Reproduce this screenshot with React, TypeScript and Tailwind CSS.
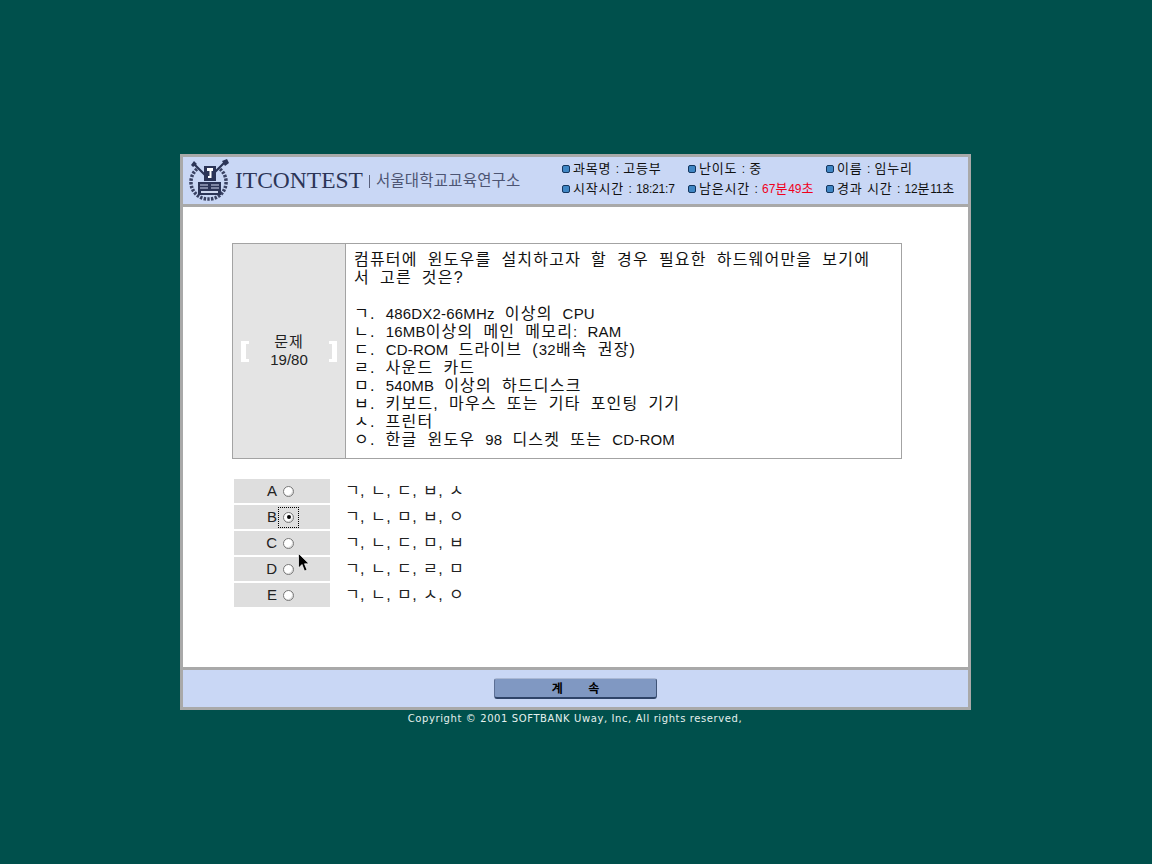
const kr = "font-['Liberation_Sans','Noto_Sans_CJK_KR',sans-serif]";

const info = [
  [{ label: "과목명 : 고등부" }, { label: "시작시간 : 18:21:7" }],
  [{ label: "난이도 : 중" }, { label: "남은시간 : ", red: "67분49초" }],
  [{ label: "이름 : 임누리" }, { label: "경과 시간 : 12분11초" }],
];

const lines = [
  "ㄱ. 486DX2-66MHz 이상의 CPU",
  "ㄴ. 16MB이상의 메인 메모리: RAM",
  "ㄷ. CD-ROM 드라이브 (32배속 권장)",
  "ㄹ. 사운드 카드",
  "ㅁ. 540MB 이상의 하드디스크",
  "ㅂ. 키보드, 마우스 또는 기타 포인팅 기기",
  "ㅅ. 프린터",
  "ㅇ. 한글 윈도우 98 디스켓 또는 CD-ROM",
];

const answers = [
  { key: "A", text: "ㄱ, ㄴ, ㄷ, ㅂ, ㅅ" },
  { key: "B", text: "ㄱ, ㄴ, ㅁ, ㅂ, ㅇ", checked: true },
  { key: "C", text: "ㄱ, ㄴ, ㄷ, ㅁ, ㅂ" },
  { key: "D", text: "ㄱ, ㄴ, ㄷ, ㄹ, ㅁ" },
  { key: "E", text: "ㄱ, ㄴ, ㅁ, ㅅ, ㅇ" },
];

// hangul runs wide like the old bitmap font, latin runs stay tight
function Mixed({ text, latin }: { text: string; latin: string }) {
  return (
    <>
      {text.split(/([A-Za-z0-9:/-]+)/).map((part, i) =>
        i % 2 === 1 ? (
          <span key={i} className={latin}>{part}</span>
        ) : (
          part
        ),
      )}
    </>
  );
}

function Bullet() {
  return (
    <span className="h-[8px] w-[8px] shrink-0 rounded-[2px] border border-[#14365f] bg-[#3f86c4]" />
  );
}

function Logo() {
  return (
    <svg width="44" height="44" viewBox="0 0 44 44" className="shrink-0">
      {/* laurel wreath */}
      <path d="M9 10A17 17 0 0 0 20 40A17 17 0 0 0 32 10" fill="none" stroke="#3a4263" strokeWidth="3.500" strokeDasharray="2.400 1.300" />
      {/* torch and pen */}
      <path d="M6 5L17 16M37 3L25 15" stroke="#2c3557" strokeWidth="2.200" />
      <path d="M3 6l3-4 3 3-4 3zM34 2l5-2 2 4-4 3z" fill="#2c3557" />
      {/* key shield */}
      <rect x="16" y="7" width="12" height="15" fill="#2c3557" />
      <path d="M19 9h6v3h-1.500v7h-3.500v-2h1.500v-5H19z" fill="#fff" />
      {/* open book */}
      <rect x="10" y="23" width="23" height="13" fill="#2c3557" />
      <path d="M12 26h8M23 26h8M12 29h8M23 29h8" stroke="#cfd8f0" strokeWidth="1.200" />
      <rect x="13" y="32" width="17" height="2" fill="#cfd8f0" />
    </svg>
  );
}

function Radio({ checked }: { checked?: boolean }) {
  return (
    <span className="flex h-[11px] w-[11px] items-center justify-center rounded-full border border-[#777] bg-white shadow-[inset_-1px_-1px_0_#ddd]">
      {checked && <span className="h-[4px] w-[4px] rounded-full bg-black" />}
    </span>
  );
}

function Bracket({ flip }: { flip?: boolean }) {
  return (
    <span
      className={`h-[21px] w-[8px] border-y-[3px] border-white ${
        flip ? "border-r-[5px]" : "border-l-[5px]"
      }`}
    />
  );
}

function Cursor() {
  return (
    <svg width="12" height="19" viewBox="0 0 12 19" className="absolute left-[298px] top-[553px]">
      <path d="M0.500 0.500V15L4 11.500 6.500 18 9 17 6.500 10.800H11z" fill="#000" stroke="#fff" strokeWidth="0.700" />
    </svg>
  );
}

export default function App() {
  return (
    <div className={`relative flex h-[864px] w-[1152px] flex-col items-center bg-[#00504c] pt-[154px] ${kr}`}>
      <div className="ml-[-1px] flex h-[556px] w-[791px] flex-col border-[3px] border-[#a9a9a9] bg-white">
        <header className="flex h-[50px] shrink-0 items-center border-b-[3px] border-[#a9a9a9] bg-[#c9d7f5]">
          <div className="flex h-full w-[342px] items-center pl-[5px] pt-[1px]">
            <Logo />
            <span className="ml-[3px] font-['Liberation_Serif',serif] text-[23.500px] leading-none text-[#2c3557]">ITCONTEST</span>
            <span className="ml-[6px] mr-[6px] h-[13px] w-px bg-[#59607c]" />
            <span className="whitespace-nowrap text-[15.500px] leading-none tracking-[0.200px] text-[#4d5573]">서울대학교교육연구소</span>
          </div>
          <div className="flex h-full flex-1 items-center pb-[3px] pl-[37px] text-[13px] leading-[19px] text-[#111]">
            {info.map((col, i) => (
              <div key={i} className={i === 0 ? "w-[126px]" : i === 1 ? "w-[138px]" : ""}>
                {col.map((row) => (
                  <div key={row.label} className="flex items-center gap-[3px] whitespace-nowrap tracking-[0.800px]">
                    <Bullet />
                    <span>
                      <Mixed text={row.label} latin="text-[12px] tracking-[-0.200px]" />
                      {row.red && (
                        <span className="text-[#f0001c]">
                          <Mixed text={row.red} latin="text-[12px] tracking-[0px]" />
                        </span>
                      )}
                    </span>
                  </div>
                ))}
              </div>
            ))}
          </div>
        </header>

        <main className="flex-1 pl-[49px] pt-[36px]">
          <section className="flex h-[216px] w-[670px] border border-[#a3a3a3]">
            <div className="flex w-[113px] shrink-0 items-center justify-between border-r border-[#a3a3a3] bg-[#e4e4e4] px-[8px]">
              <Bracket />
              <div className="text-center text-[15px] leading-[18px] text-[#222]">
                <span className="tracking-[1px]">문제</span>
                <br />
                19/80
              </div>
              <Bracket flip />
            </div>
            <div className="flex-1 pl-[8px] pr-[20px] pt-[7px] text-[16px] leading-[18px] tracking-[1.200px] text-[#111] [word-spacing:4.400px]">
              <p className="whitespace-nowrap">컴퓨터에 윈도우를 설치하고자 할 경우 필요한 하드웨어만을 보기에</p>
              <p>서 고른 것은?</p>
              <p className="h-[18px]" />
              {lines.map((line) => (
                <p key={line} className="whitespace-nowrap">
                  <Mixed text={line} latin="text-[15px] tracking-[0.200px]" />
                </p>
              ))}
            </div>
          </section>

          <div className="mt-[20px] flex flex-col gap-[2px] pl-[2px]">
            {answers.map((a) => (
              <div key={a.key} className="flex h-[24px] items-center">
                <div className="relative flex h-full w-[96px] items-center bg-[#dedede] text-[15px] text-[#222]">
                  <span className="absolute right-[53px]">{a.key}</span>
                  <span
                    className={`absolute left-[44px] flex h-[21px] w-[21px] items-center justify-center ${
                      a.checked ? "border border-dotted border-black" : ""
                    }`}
                  >
                    <Radio checked={a.checked} />
                  </span>
                </div>
                <span className="ml-[15px] pb-[1px] text-[16px] tracking-[0.400px] text-[#222] [word-spacing:1.200px]">{a.text}</span>
              </div>
            ))}
          </div>
        </main>

        <footer className="flex h-[40px] shrink-0 items-center justify-center border-t-[3px] border-[#a9a9a9] bg-[#c9d7f5]">
          <button className="h-[21px] w-[163px] rounded-[3px] border-b-2 border-r border-t border-l border-b-[#2f4468] border-r-[#3f5376] border-t-[#aab8d4] border-l-[#5c6f95] bg-[#8098c2] pt-[1px] text-[12px] font-bold leading-none text-black [word-spacing:22px]">
            계 속
          </button>
        </footer>
      </div>
      <p className="mt-[1px] ml-[-2px] font-['DejaVu_Sans',sans-serif] text-[10px] leading-[16px] tracking-[0.600px] text-[#e6f0ee]">
        Copyright © 2001 SOFTBANK Uway, Inc, All rights reserved,
      </p>
      <Cursor />
    </div>
  );
}
